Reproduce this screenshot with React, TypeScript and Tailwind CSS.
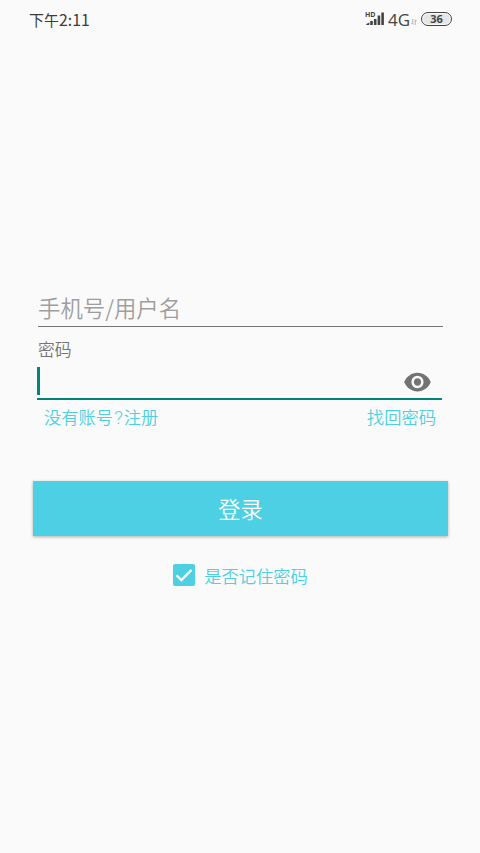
import { useState } from "react";

function StatusBar() {
  return (
    <header className="flex h-[38px] items-center justify-between pr-[28px] pl-[29px] font-normal text-[#444444]">
      <span className="mt-0.5 flex items-center font-['Open_Sans','Noto_Sans_CJK_SC',sans-serif] text-[15px] leading-5 text-[#3c3c3c]">
        下午
        <span className="font-['Noto_Sans_CJK_SC',sans-serif] text-[15.8px]">2:11</span>
      </span>

      <div className="flex items-center">
        <SignalIcon />
        <span className="mt-px ml-[3px] font-['Open_Sans',sans-serif] text-[17px] leading-5">4G</span>
        <DataArrowsIcon />
        <span className="ml-1 flex h-[14px] w-[31px] items-center justify-center rounded-full border-[1.5px] border-[#444444] bg-[#fafafa] p-px">
          <span className="flex h-full w-full items-center justify-center rounded-full bg-[#e6e6e6] pb-px font-['Open_Sans',sans-serif] text-[11px] leading-none font-bold">
            36
          </span>
        </span>
      </div>
    </header>
  );
}

function SignalIcon() {
  return (
    <span className="relative block h-[14px] w-5">
      <svg width="20" height="14" viewBox="0 0 20 14" fill="currentColor">
        <path d="M1.3 13v-1l3-1.6V13z" />
        <rect x="5.2" y="9" width="2.6" height="4" />
        <rect x="8.9" y="7" width="2.6" height="6" />
        <rect x="12.6" y="3.5" width="2.6" height="9.5" />
        <rect x="16.3" y="0.5" width="2.6" height="12.5" />
      </svg>
      <span className="absolute -top-px left-0 font-['Open_Sans',sans-serif] text-[7px] leading-2 font-bold">
        HD
      </span>
    </span>
  );
}

function DataArrowsIcon() {
  return (
    <svg
      className="mt-1.5 ml-px"
      width="6"
      height="6"
      viewBox="0 0 6 6"
      fill="none"
      stroke="#aaaaaa"
      strokeWidth="0.9"
    >
      <path d="M1.8 0v5.3L.3 3.8M4.2 6V.7l1.5 1.5" />
    </svg>
  );
}

function EyeIcon() {
  return (
    <svg width="29" height="30" viewBox="0 0 24 24" preserveAspectRatio="none" fill="#737373">
      <path d="M12 4.5C7 4.5 2.73 7.61 1 12c1.73 4.39 6 7.5 11 7.5s9.27-3.11 11-7.5c-1.73-4.39-6-7.5-11-7.5zM12 17c-2.76 0-5-2.24-5-5s2.24-5 5-5 5 2.24 5 5-2.24 5-5 5zm0-8c-1.66 0-3 1.34-3 3s1.34 3 3 3 3-1.34 3-3-1.34-3-3-3z" />
    </svg>
  );
}

export default function App() {
  const [account, setAccount] = useState("");
  const [remember, setRemember] = useState(true);

  return (
    <div className="flex h-[853px] w-[480px] flex-col bg-[#fafafa] font-['Noto_Sans_CJK_SC',sans-serif] font-[350]">
      <StatusBar />

      <form
        className="flex flex-col pt-[252px] pr-8 pl-[33px]"
        onSubmit={(e) => e.preventDefault()}
      >
        <input
          value={account}
          placeholder="手机号/用户名"
          onChange={(e) => setAccount(e.target.value)}
          className="mx-[5px] h-[37px] border-b border-[#757575] pb-[3px] text-[22.4px] leading-8 text-[#444444] outline-none placeholder:text-[#9e9e9e]"
        />

        <label className="mt-[10px] ml-[5px] text-[16.8px] leading-6 text-[#757575]">
          密码
        </label>

        {/* focused password field */}
        <div className="mt-[6px] mr-[6px] ml-1 flex h-[33px] items-start justify-between border-b-2 border-[#008577] pr-[10px]">
          <span className="h-7 w-[3px] bg-[#008577]" />
          <button type="button" aria-label="显示密码">
            <EyeIcon />
          </button>
        </div>

        <div className="mt-[5px] flex h-6 justify-between pr-3 pl-[11px] text-[17.3px] leading-6 text-[#4dd0e1]">
          <a href="#register">
            没有账号
            <span className="px-px font-['Roboto',sans-serif] text-[19px] leading-none">?</span>
            注册
          </a>
          <a href="#recover">找回密码</a>
        </div>

        <button
          type="submit"
          className="mt-[52px] h-[55px] bg-[#4dd0e3] text-[22.2px] text-white shadow-[0_1px_3px_rgba(0,0,0,0.3)]"
        >
          登录
        </button>

        <button
          type="button"
          role="checkbox"
          aria-checked={remember}
          onClick={() => setRemember(!remember)}
          className="mt-[27px] flex items-center self-center text-[17.3px] leading-6 text-[#4dd0e1]"
        >
          <span className="mr-[9px] mb-px flex size-[22px] items-center justify-center rounded-xs bg-[#4dd0e1]">
            {remember && (
              <svg width="22" height="22" viewBox="0 0 22 22" fill="none" stroke="#fafafa" strokeWidth="2.3">
                <path d="M3.5 11.2l4.9 4.9L18.6 5.9" />
              </svg>
            )}
          </span>
          <span className="pt-px">是否记住密码</span>
        </button>
      </form>
    </div>
  );
}
